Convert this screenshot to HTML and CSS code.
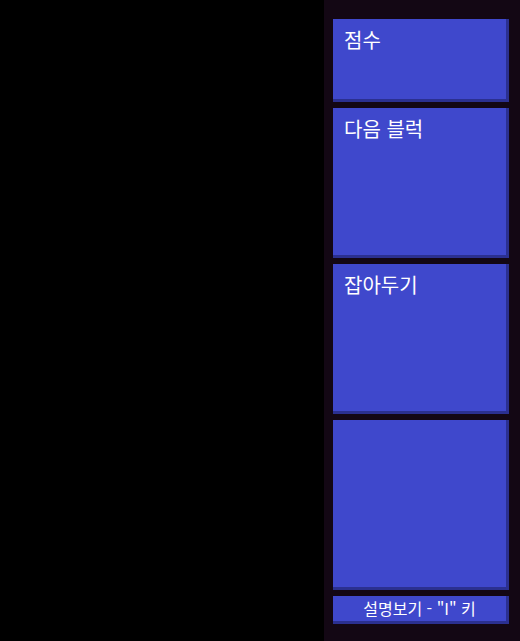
FILE: index.html
```html
<!DOCTYPE html>
<html lang="ko">
<head>
<meta charset="utf-8">
<link rel="stylesheet" href="styles.css">
</head>
<body>
<div class="app">
  <div class="board"></div>
  <aside class="side">
    <div class="panel score"><span class="label">점수</span></div>
    <div class="panel next"><span class="label">다음 블럭</span></div>
    <div class="panel hold"><span class="label">잡아두기</span></div>
    <div class="panel extra"></div>
    <div class="panel help">설명보기 - "I" 키</div>
  </aside>
</div>
</body>
</html>
```
FILE: styles.css
```css
html, body {
  margin: 0;
  padding: 0;
  background: #000;
  height: 100%;
}
.app {
  display: flex;
  height: 641px;
  font-family: "Noto Sans CJK KR", "Noto Sans", sans-serif;
  color: #fff;
}
.board {
  width: 324px;
  background: #000;
}
.side {
  flex: 1;
  background: #130714;
  display: flex;
  flex-direction: column;
  gap: 6px;
  padding: 19px 11px 0 9px;
}
.panel {
  background: #3f48cc;
  border-right: 3px solid #2b3090;
  border-bottom: 3px solid #2b3090;
  box-sizing: border-box;
}
.label {
  display: block;
  font-size: 20px;
  line-height: 24px;
  padding: 9px 0 0 11px;
}
.score { height: 83px; }
.next { height: 150px; }
.hold { height: 150px; }
.extra { height: 170px; }
.help {
  height: 28px;
  font-size: 16px;
  line-height: 25px;
  text-align: center;
}
```
